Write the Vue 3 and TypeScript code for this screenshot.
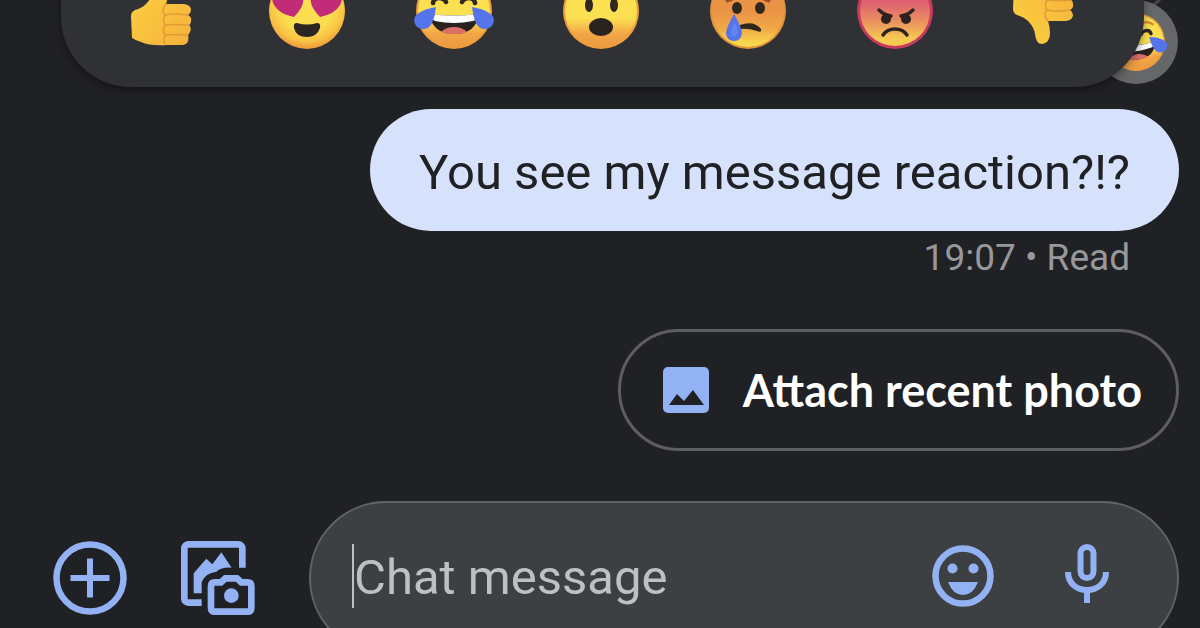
<script setup lang="ts">
import { ref } from 'vue'

interface Reaction {
  id: string
  label: string
}

const reactions: Reaction[] = [
  { id: 'thumb-up', label: 'Like' },
  { id: 'heart-eyes', label: 'Love' },
  { id: 'joy', label: 'Laugh' },
  { id: 'wow', label: 'Surprised' },
  { id: 'sad', label: 'Sad' },
  { id: 'angry', label: 'Angry' },
  { id: 'thumb-down', label: 'Dislike' },
]

const draft = ref('')
</script>

<template>
  <main class="screen">
    <svg class="sprites" aria-hidden="true">
      <defs>
        <radialGradient id="face-yellow" cx="0.5" cy="0.4" r="0.62">
          <stop offset="0.55" stop-color="#fbdf50" />
          <stop offset="0.82" stop-color="#f9c044" />
          <stop offset="1" stop-color="#ea8f38" />
        </radialGradient>
        <linearGradient id="face-sunset" x1="0" y1="0" x2="0" y2="1">
          <stop offset="0.6" stop-color="#fbe052" />
          <stop offset="0.82" stop-color="#f2a546" />
          <stop offset="1" stop-color="#ee9a42" />
        </linearGradient>
        <linearGradient id="face-sad" x1="0" y1="0" x2="0" y2="1">
          <stop offset="0.5" stop-color="#ea9345" />
          <stop offset="0.75" stop-color="#f0a947" />
          <stop offset="0.95" stop-color="#f8d84e" />
        </linearGradient>
        <linearGradient id="face-angry" x1="0" y1="0" x2="0" y2="1">
          <stop offset="0.3" stop-color="#dc5573" />
          <stop offset="0.62" stop-color="#e88b62" />
          <stop offset="0.9" stop-color="#f7ca50" />
        </linearGradient>
        <linearGradient id="hand" x1="0" y1="0" x2="1" y2="1">
          <stop offset="0.3" stop-color="#fac83f" />
          <stop offset="1" stop-color="#f5b03b" />
        </linearGradient>

        <symbol id="thumb-up" viewBox="0 0 76 76">
          <path
            d="M9 43Q9 39 13 37Q20 35 24 31Q30 25 31 18Q32 8 38 8Q46 9 46 19Q46 25 44 31H62Q69 32 69 37Q69 40 66 42Q70 44 69 48Q69 51 67 52Q70 55 68 59Q67 61 66 62Q68 71 61 72H45Q28 73 19 69Q13 67 10 65Z"
            fill="url(#hand)"
          />
          <path
            d="M44 31Q41 34 41 38Q41 40 43 42Q50 40 66 42M43 42Q40 47 43 52Q52 51 67 52M43 52Q40 57 43 62Q52 61 66 62M43 62Q41 67 43 71"
            fill="none"
            stroke="#e39a36"
            stroke-width="1.500"
            stroke-linecap="round"
          />
        </symbol>

        <symbol id="thumb-down" viewBox="0 0 76 76">
          <use href="#thumb-up" width="76" height="76" transform="matrix(1 0 0 -1 0 79)" />
        </symbol>

        <symbol id="heart-eyes" viewBox="0 0 76 76">
          <circle cx="38" cy="38" r="38" fill="url(#face-yellow)" />
          <path d="M25 44Q10 41 5 32Q0 22 8 18Q16 14 20 23Q26 15 32 20Q39 30 25 44Z" fill="#c22b78" />
          <path d="M51 44Q66 41 71 32Q76 22 68 18Q60 14 56 23Q50 15 44 20Q37 30 51 44Z" fill="#c22b78" />
          <path d="M28 50Q38 53 48 50Q52 50 51 55Q48 64 38 64Q27 64 25 55Q24 50 28 50Z" fill="#2b2622" />
        </symbol>

        <symbol id="joy" viewBox="0 0 76 76">
          <circle cx="38" cy="38" r="38" fill="#ee9d3d" />
          <circle cx="38" cy="38" r="36" fill="url(#face-sunset)" />
          <path
            d="M13 18Q20 12 26 15M63 18Q56 12 50 15"
            fill="none"
            stroke="#d98b30"
            stroke-width="3"
            stroke-linecap="round"
          />
          <path
            d="M17 30Q18 25 23 25Q28 25 30 29M46 29Q48 25 53 25Q58 25 59 30"
            fill="none"
            stroke="#30271f"
            stroke-width="4.500"
            stroke-linecap="round"
          />
          <path d="M13 41Q38 44 63 41Q60 61 38 61Q17 61 13 41Z" fill="#29221f" />
          <path d="M14 41Q38 44 62 41Q61 47 57 48Q38 52 19 48Q15 46 14 41Z" fill="#fff" />
          <path d="M25 59Q30 54 38 54Q46 54 51 59Q46 61 38 61Q30 61 25 59Z" fill="#dc7067" />
          <path d="M20 34Q18 51 12 55Q5 58 0 53Q-5 45 3 40Q8 36 20 34Z" fill="#5474eb" />
          <path d="M56 34Q58 51 64 55Q71 58 76 53Q81 45 73 40Q68 36 56 34Z" fill="#5474eb" />
        </symbol>

        <symbol id="wow" viewBox="0 0 76 76">
          <circle cx="38" cy="38" r="38" fill="#ee9d3d" />
          <circle cx="38" cy="38" r="36" fill="url(#face-sunset)" />
          <ellipse cx="26" cy="32" rx="4" ry="7" fill="#30271f" />
          <ellipse cx="51" cy="32" rx="4" ry="7" fill="#30271f" />
          <ellipse cx="38" cy="54" rx="12" ry="9" fill="#29231f" />
        </symbol>

        <symbol id="sad" viewBox="0 0 76 76">
          <circle cx="38" cy="38" r="38" fill="#e29339" />
          <circle cx="38" cy="38" r="36" fill="url(#face-sad)" />
          <path d="M17 28Q23 27 26 22M59 28Q53 27 50 22" fill="none" stroke="#9c4f28" stroke-width="3" stroke-linecap="round" />
          <ellipse cx="27" cy="35" rx="5" ry="6" fill="#30271f" />
          <ellipse cx="50" cy="35" rx="5" ry="6" fill="#30271f" />
          <path d="M30 52Q44 47 51 56Q52 60 47 58Q38 55 30 56Z" fill="#30271f" />
          <path d="M24 41Q17 53 16 60Q17 68 24 68Q31 68 32 60Q31 53 24 41Z" fill="#5474eb" />
          <path d="M25 49Q21 56 21 60Q22 64 25 64Q28 62 28 58Z" fill="#6383f2" />
        </symbol>

        <symbol id="angry" viewBox="0 0 76 76">
          <circle cx="38" cy="38" r="38" fill="#c93a5f" />
          <circle cx="38" cy="38" r="35" fill="url(#face-angry)" />
          <circle cx="29" cy="46" r="5" fill="#30221f" />
          <circle cx="49" cy="46" r="5" fill="#30221f" />
          <path
            d="M22 37Q27 42 34 43M56 37Q51 42 44 43M26 62Q30 56 38 56Q46 56 50 62"
            fill="none"
            stroke="#30221f"
            stroke-width="3.500"
            stroke-linecap="round"
          />
        </symbol>
      </defs>
    </svg>

    <header class="top">
      <div class="earlier-bubble"></div>
      <span class="badge" role="img" aria-label="Laugh reaction">
        <svg class="badge-face" viewBox="0 0 58 58">
          <use href="#joy" width="58" height="58" transform="rotate(-8 29 29)" />
        </svg>
      </span>
      <div class="reaction-bar" role="toolbar" aria-label="Reactions">
        <button v-for="r in reactions" :key="r.id" type="button" class="reaction" :aria-label="r.label">
          <svg class="face" aria-hidden="true"><use :href="'#' + r.id" /></svg>
        </button>
      </div>
    </header>

    <section class="thread">
      <p class="bubble">You see my message reaction?!?</p>
      <p class="status">19:07 • Read</p>
      <button type="button" class="chip">
        <svg class="chip-icon" viewBox="0 0 46 46" aria-hidden="true">
          <rect width="46" height="46" rx="5" fill="#93b2f3" />
          <path d="M6 38L14 27L21 34L30 23L41 38Z" fill="#202125" />
        </svg>
        <span>Attach recent photo</span>
      </button>
    </section>

    <form class="composer" @submit.prevent>
      <button type="button" class="tool" aria-label="Add">
        <svg class="tool-icon" viewBox="0 0 74 74" aria-hidden="true">
          <circle cx="37" cy="37" r="33.500" fill="none" stroke="#93b2f3" stroke-width="6.500" />
          <path d="M37 17.500V56.500M17.500 37H56.500" stroke="#93b2f3" stroke-width="6" />
        </svg>
      </button>
      <button type="button" class="tool" aria-label="Gallery and camera">
        <svg class="tool-icon" viewBox="0 0 222 222" aria-hidden="true">
          <g fill="none" stroke="#93b2f3" stroke-width="20">
            <path d="M62 185H22a12 12 0 0 1-12-12V22a12 12 0 0 1 12-12H172a12 12 0 0 1 12 12V80" />
            <path
              d="M90 136Q90 124 102 124H120L133 112H168L181 124H200Q211 124 211 136V200Q211 212 200 212H102Q90 212 90 200Z"
            />
          </g>
          <path d="M38 157V97L76 53L94 70L121 34L152 80Q122 78 106 92Q72 96 62 124V157Z" fill="#93b2f3" />
          <circle cx="151" cy="164" r="22" fill="#93b2f3" />
        </svg>
      </button>
      <div class="field">
        <span class="caret" aria-hidden="true"></span>
        <input v-model="draft" class="input" type="text" placeholder="Chat message" aria-label="Chat message" />
        <button type="button" class="tool" aria-label="Emoji">
          <svg class="emoji-icon" viewBox="0 0 62 62" aria-hidden="true">
            <circle cx="31" cy="31" r="27.500" fill="none" stroke="#93b2f3" stroke-width="6.500" />
            <circle cx="20.500" cy="23.500" r="5" fill="#93b2f3" />
            <circle cx="41.500" cy="23.500" r="5" fill="#93b2f3" />
            <path d="M16 37H46Q41 50 31 50Q21 50 16 37Z" fill="#93b2f3" />
          </svg>
        </button>
        <button type="button" class="tool mic" aria-label="Record voice message">
          <svg class="mic-icon" viewBox="0 0 44 64" aria-hidden="true">
            <g fill="none" stroke="#93b2f3" stroke-width="6">
              <rect x="15.500" y="3" width="13" height="31" rx="6.500" />
              <path d="M3 28C3 52 41 52 41 28" />
              <path d="M22 45V59" />
            </g>
          </svg>
        </button>
      </div>
    </form>
  </main>
</template>

<style>
body {
  margin: 0;
  background: #202125;
}
</style>

<style scoped>
.screen {
  display: flex;
  flex-direction: column;
  height: 100vh;
  overflow: hidden;
  background: #202125;
  font-family: Roboto, 'Liberation Sans', sans-serif;
}

.sprites {
  position: absolute;
  width: 0;
  height: 0;
}

.sprites symbol {
  overflow: visible;
}

button {
  border: 0;
  padding: 0;
  background: none;
  color: inherit;
  font: inherit;
}

svg {
  display: block;
  overflow: visible;
}

.top {
  position: relative;
  flex: none;
  margin-top: -65px;
  padding: 0 56px 0 61px;
}

.reaction-bar {
  position: relative;
  display: flex;
  align-items: center;
  justify-content: space-between;
  height: 152px;
  padding: 0 64px 0 61px;
  border-radius: 70px;
  background: #303134;
  box-shadow: 0 3px 8px rgba(0, 0, 0, 0.4);
}

.face {
  width: 76px;
  height: 76px;
}

.earlier-bubble {
  position: absolute;
  right: 22px;
  bottom: 68px;
  width: 200px;
  height: 122px;
  border: 3px solid #44464a;
  border-radius: 61px;
  box-sizing: border-box;
}

.badge {
  position: absolute;
  right: 22px;
  bottom: 3px;
  display: flex;
  align-items: center;
  justify-content: center;
  width: 84px;
  height: 84px;
  border-radius: 50%;
  background: #666768;
}

.badge-face {
  width: 58px;
  height: 58px;
}

.thread {
  display: flex;
  flex: none;
  flex-direction: column;
  align-items: flex-end;
  padding: 22px 21px 0;
}

.bubble {
  margin: 0;
  padding: 35px 49px 29px;
  border-radius: 61px;
  background: #d6e2fb;
  color: #202125;
  font-size: 49px;
  line-height: 58px;
}

.status {
  margin: 5px 49px 0 0;
  color: #96989b;
  font-size: 37px;
  line-height: 44px;
}

.chip {
  display: flex;
  align-items: center;
  gap: 34px;
  margin-top: 49px;
  padding: 30px 34px 30px 42px;
  border: 3px solid #5d5e62;
  border-radius: 61px;
  color: #fff;
  font-family: Lato, 'Liberation Sans', sans-serif;
  font-size: 45px;
  font-weight: 700;
  line-height: 56px;
}

.chip-icon {
  width: 46px;
  height: 46px;
}

.composer {
  display: flex;
  flex: none;
  align-items: center;
  margin-top: 50px;
  padding: 0 21px 0 53px;
  gap: 54px;
}

.tool {
  flex: none;
}

.tool-icon {
  width: 74px;
  height: 74px;
}

.field {
  display: flex;
  flex: 1;
  align-items: center;
  min-width: 0;
  padding: 41px 68px 45px 41px;
  border: 2px solid #606265;
  border-radius: 77px;
  background: #3d4043;
}

.caret {
  flex: none;
  width: 2px;
  height: 64px;
  background: #bdc1c6;
}

.input {
  flex: 1;
  min-width: 0;
  height: 64px;
  padding: 2px 0 0;
  border: 0;
  outline: 0;
  background: none;
  color: #e8eaed;
  font: inherit;
  font-size: 49px;
  box-sizing: border-box;
}

.input::placeholder {
  color: #bdc1c6;
  opacity: 1;
}

.emoji-icon {
  width: 62px;
  height: 62px;
}

.mic {
  margin-left: 71px;
}

.mic-icon {
  width: 44px;
  height: 64px;
}
</style>
